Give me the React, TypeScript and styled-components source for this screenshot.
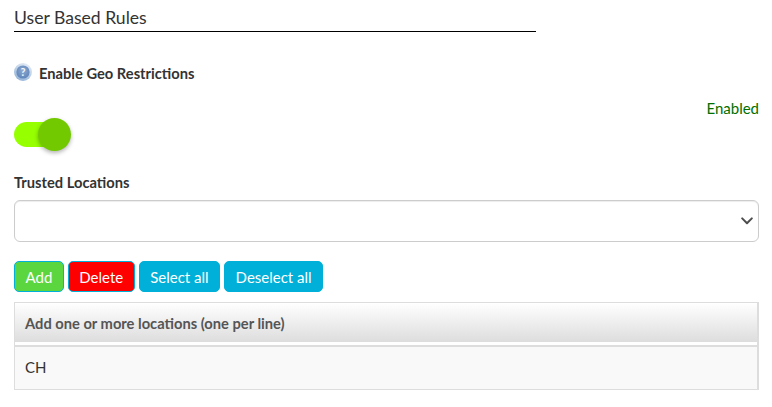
import styled, { createGlobalStyle } from 'styled-components';

const GlobalStyle = createGlobalStyle`
  html, body {
    margin: 0;
    padding: 0;
    background: #fff;
    font-family: Lato, "Open Sans", sans-serif;
    color: #333;
  }
`;

const Page = styled.div`
  width: 772px;
  height: 407px;
  box-sizing: border-box;
  padding: 0 13px 0 14px;
  overflow: hidden;
`;

const SectionTitle = styled.div`
  width: 522px;
  height: 32px;
  box-sizing: border-box;
  padding-top: 6px;
  border-bottom: 1px solid #000;
  font-size: 17.6px;
  line-height: 24px;
  color: #333;
`;

const LabelRow = styled.div`
  display: flex;
  align-items: flex-start;
  gap: 7px;
  margin-top: 31px;
  height: 22px;
`;

const Label = styled.div`
  font-size: 14.7px;
  line-height: 20px;
  font-weight: 700;
  color: #333;
`;

const Status = styled.div`
  margin-top: 13px;
  text-align: right;
  font-size: 15px;
  line-height: 20px;
  color: #006f00;
`;

const SwitchTrack = styled.div`
  position: relative;
  width: 52px;
  height: 25px;
  margin-top: 4px;
  border-radius: 13px;
  background: #96ff00;
`;

const SwitchKnob = styled.div`
  position: absolute;
  top: -4px;
  right: -5px;
  width: 33px;
  height: 33px;
  border-radius: 50%;
  background: #72c900;
  box-shadow: 0 2px 4px rgba(0, 0, 0, 0.3);
`;

const FieldLabel = styled(Label)`
  margin-top: 25px;
`;

const SelectBox = styled.div`
  display: flex;
  align-items: center;
  justify-content: flex-end;
  height: 42px;
  box-sizing: border-box;
  margin-top: 8px;
  padding-right: 5px;
  border: 1px solid #ccc;
  border-radius: 6px;
  box-shadow: inset 0 1px 1px rgba(0, 0, 0, 0.075);
`;

const ButtonRow = styled.div`
  display: flex;
  gap: 4px;
  margin-top: 19px;
`;

const Button = styled.button<{ $bg: string }>`
  height: 31px;
  padding: 0 10.5px;
  border: 1px solid #00b0d8;
  border-radius: 5px;
  background: ${(p) => p.$bg};
  color: #fff;
  font-family: inherit;
  font-size: 15px;
  line-height: 20px;
`;

const Table = styled.div`
  margin-top: 10px;
  border: 1px solid #ddd;
  border-right-width: 2px;
  background: #f9f9f9;
`;

const TableHead = styled.div`
  height: 39px;
  padding: 0 10px;
  display: flex;
  align-items: center;
  font-size: 14.7px;
  font-weight: 700;
  color: #555;
  background: linear-gradient(to bottom, #fff, #ddd);
  border-bottom: 3px solid #fff;
`;

const TableCell = styled.div`
  height: 44px;
  box-sizing: border-box;
  padding: 0 10px 2px;
  display: flex;
  align-items: center;
  border-top: 2px solid #ddd;
  font-size: 15px;
  color: #333;
`;

const HelpIcon = () => (
  <svg width="18" height="18" viewBox="0 0 18 18">
    <defs>
      <linearGradient id="helpRing" x1="0.7" y1="0" x2="0.2" y2="1">
        <stop offset="0%" stopColor="#e4ecf5" />
        <stop offset="100%" stopColor="#8fb0d6" />
      </linearGradient>
      <radialGradient id="helpCore" cx="50%" cy="40%" r="60%">
        <stop offset="0%" stopColor="#8fa9cf" />
        <stop offset="100%" stopColor="#5f86ba" />
      </radialGradient>
    </defs>
    <circle cx="9" cy="9" r="9" fill="url(#helpRing)" />
    <circle cx="9" cy="9" r="6.6" fill="url(#helpCore)" />
    <text x="9" y="13" textAnchor="middle" fontSize="11" fontWeight="700" fill="#f2f6fb" fontFamily="Lato, sans-serif">
      ?
    </text>
  </svg>
);

const Chevron = () => (
  <svg width="12" height="8" viewBox="0 0 12 8">
    <path d="M1.2 1.4L6 6.2l4.8-4.8" fill="none" stroke="#4d4d4d" strokeWidth="2" strokeLinecap="round" strokeLinejoin="round" />
  </svg>
);

const App = () => {
  return (
    <Page>
      <GlobalStyle />
      <SectionTitle>User Based Rules</SectionTitle>
      <LabelRow>
        <HelpIcon />
        <Label>Enable Geo Restrictions</Label>
      </LabelRow>
      <Status>Enabled</Status>
      <SwitchTrack>
        <SwitchKnob />
      </SwitchTrack>
      <FieldLabel>Trusted Locations</FieldLabel>
      <SelectBox>
        <Chevron />
      </SelectBox>
      <ButtonRow>
        <Button $bg="#5cd63f">Add</Button>
        <Button $bg="#ff0000">Delete</Button>
        <Button $bg="#00b0d8">Select all</Button>
        <Button $bg="#00b0d8">Deselect all</Button>
      </ButtonRow>
      <Table>
        <TableHead>Add one or more locations (one per line)</TableHead>
        <TableCell>CH</TableCell>
      </Table>
    </Page>
  );
};

export default App;
